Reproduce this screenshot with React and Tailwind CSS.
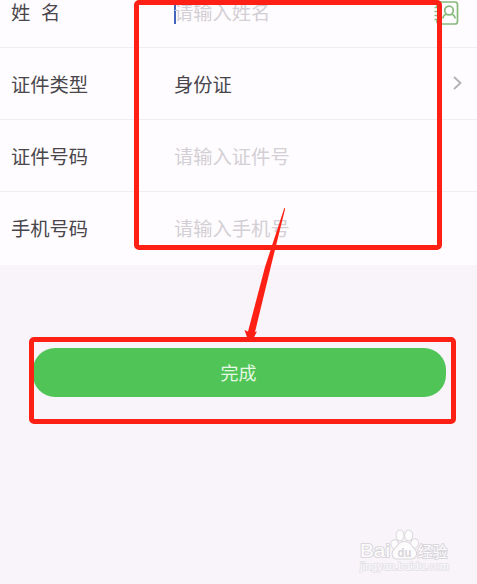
import React from 'react';

const rows = [
  { label: '姓  名', placeholder: '请输入姓名', height: 'h-[72px]', focused: true, contact: true },
  { label: '证件类型', value: '身份证', height: 'h-[72px]', arrow: true },
  { label: '证件号码', placeholder: '请输入证件号', height: 'h-[72px]' },
  { label: '手机号码', placeholder: '请输入手机号', height: 'h-[71px]' },
];

const ContactIcon = () => (
  <svg className="-mt-[3px] h-[26px] w-[26px]" viewBox="0 0 26 26" fill="none" stroke="#86bb7c" strokeWidth="1.7">
    <path d="M4 7V4.500Q4 2 6.500 2H22Q24.500 2 24.500 4.500V21.500Q24.500 24 22 24H6.500Q4 24 4 21.500V20" />
    <path d="M1.500 7.500H7M1.500 11.500H7M1.500 15.500H7M1.500 19.500H7" />
    <circle cx="16" cy="10.500" r="4.300" />
    <path d="M10 18.500C10 16 11.700 14.700 13.500 14.200M18.500 14.200C20.300 14.700 22 16 22 18.500" />
  </svg>
);

const FormRow = ({ row, last }) => (
  <div className={`flex ${row.height} items-center pt-[5px] pl-[11px] ${last ? '' : 'border-b border-[#f1eef3]'}`}>
    <span className="w-[163px] whitespace-pre text-[19.3px] text-[#49464b]">{row.label}</span>
    {row.focused && <span className="-mt-1 -mr-0.5 h-[23px] w-0.5 bg-[#4264bd]" />}
    {row.value ? (
      <span className="text-[19.3px] text-[#49464b]">{row.value}</span>
    ) : (
      <span className="text-[19.3px] text-[#d3cfd5]">{row.placeholder}</span>
    )}
    {row.contact && (
      <span className="ml-auto pr-[18px]">
        <ContactIcon />
      </span>
    )}
    {row.arrow && (
      <svg className="mr-[15px] -mt-1.5 ml-auto h-[14px] w-[9px]" viewBox="0 0 9 14" fill="none" stroke="#b5b2b7" strokeWidth="1.9">
        <path d="M1 1L7.500 7L1 13" />
      </svg>
    )}
  </div>
);

const Watermark = () => (
  <svg className="absolute top-[526px] left-[356px] h-[50px] w-[100px]" viewBox="0 0 100 50">
    <g fill="#fdfcfd" stroke="#dad7dc" strokeWidth="2" paintOrder="stroke" strokeLinejoin="round">
      <text x="4" y="31" fontSize="19" textLength="30" lengthAdjust="spacingAndGlyphs">Bai</text>
      <ellipse cx="38.800" cy="18.500" rx="3.300" ry="4.200" transform="rotate(-18 38.800 18.500)" />
      <ellipse cx="44" cy="9.500" rx="3.500" ry="4.900" />
      <ellipse cx="52.700" cy="9.500" rx="3.500" ry="4.900" />
      <ellipse cx="58.500" cy="17.500" rx="3.300" ry="4.200" transform="rotate(18 58.500 17.500)" />
      <path d="M48.500 16C54 16 55 20 58 23C62 27 60 32.500 55 32.500H41C36.500 32.500 35 27 39 23C42 20 43 16 48.500 16Z" />
      <text x="61.500" y="30.500" fontSize="15" textLength="30" lengthAdjust="spacingAndGlyphs">经验</text>
      <text x="4" y="43.500" fontSize="10" stroke="#e3e0e5" strokeWidth="1.500" textLength="89" lengthAdjust="spacingAndGlyphs">jingyan.baidu.com</text>
    </g>
    <text x="41.500" y="30.500" fontSize="12" fontWeight="700" fill="#d8d5da" textLength="14" lengthAdjust="spacingAndGlyphs">du</text>
  </svg>
);

const App = () => {
  return (
    <div className="relative h-[584px] w-[477px] overflow-hidden bg-[#f8f4fa] font-['Liberation_Sans','Noto_Sans_CJK_SC',sans-serif]">
      <div className="-mt-6 h-[289px] bg-[#fefcfe]">
        {rows.map((row, i) => (
          <FormRow key={row.label} row={row} last={i === rows.length - 1} />
        ))}
      </div>

      <div className="mt-[83px] pr-[31px] pl-[33px]">
        <button className="flex h-[49px] w-full items-center justify-center rounded-[22px] bg-[#50c456] pt-1 pr-0.5 text-[18px] text-[#e6f9e5]">
          完成
        </button>
      </div>

      <Watermark />

      {/* red highlight boxes */}
      <div className="absolute top-0 left-[134px] h-[250px] w-[308px] rounded-[5px] border-5 border-[#ff2015]" />
      <div className="absolute top-[337px] left-[29px] h-[87px] w-[427px] rounded-[5px] border-5 border-[#ff2015]" />
      <svg className="absolute top-[204px] left-[240px] h-[138px] w-[50px]" viewBox="0 0 50 138" fill="#ff2015">
        <path d="M44.300 4L45.200 4.500L30.500 64L15 128L17 127.500L12.500 136H8L4.500 126L8 127.500L25 63Z" />
      </svg>
    </div>
  );
};

export default App;
